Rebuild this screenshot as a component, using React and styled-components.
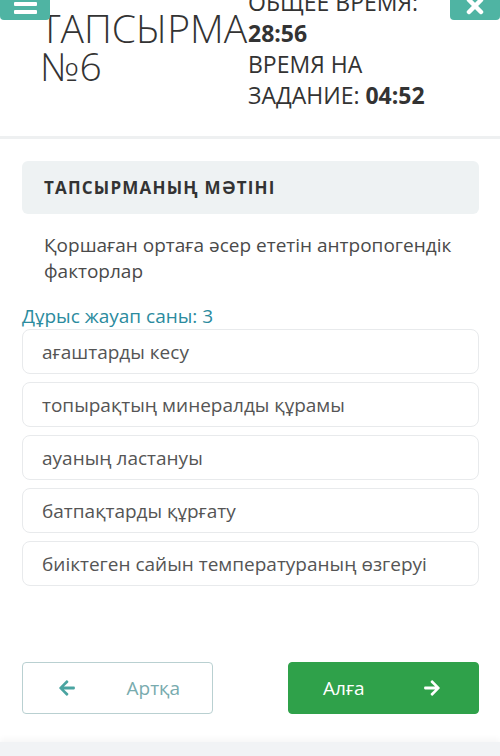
import React from "react";
import styled, { createGlobalStyle } from "styled-components";
import { FaArrowLeft, FaArrowRight } from "react-icons/fa";

const GlobalStyle = createGlobalStyle`
  html, body {
    margin: 0;
    padding: 0;
    background: #ffffff;
    font-family: "Open Sans", "Noto Sans", Arial, sans-serif;
    color: #333;
    overflow: hidden;
  }
  * { box-sizing: border-box; }
`;

const Page = styled.div`
  position: relative;
  width: 500px;
  min-height: 756px;
  display: flex;
  flex-direction: column;
  overflow: hidden;
`;

const CornerButton = styled.button`
  position: absolute;
  top: -30px;
  ${(p) => (p.$side === "left" ? "left: 0;" : "right: 0;")}
  width: 50px;
  height: 50px;
  border: none;
  border-radius: 4px;
  background: #4fb4a3;
  display: flex;
  align-items: center;
  justify-content: center;
  padding: 0;
  z-index: 2;
`;

const Burger = styled.span`
  display: flex;
  flex-direction: column;
  gap: 4px;
  margin-top: 18px;
`;

const BurgerBar = styled.span`
  display: block;
  width: 23px;
  height: 4px;
  border-radius: 1px;
  background: #ffffff;
`;

const Header = styled.header`
  margin-top: -13px;
  padding-left: 40px;
  display: flex;
  align-items: flex-start;
  height: 152px;
  border-bottom: 3px solid #eef0f1;
`;

const TitleCol = styled.div`
  flex: 0 0 208px;
  padding-top: 22px;
`;

const Title = styled.h1`
  margin: 0;
  font-size: 39px;
  line-height: 38px;
  font-weight: 300;
  color: #333;
  white-space: nowrap;
`;

const TimerCol = styled.div`
  font-size: 23px;
  line-height: 31px;
  color: #333;
`;

const TimerLine = styled.div`
  white-space: nowrap;
  font-weight: ${(p) => (p.$bold ? 700 : 400)};
`;

const Strong = styled.b`
  font-weight: 700;
`;

const Main = styled.main`
  padding: 0 21px 0 22px;
  display: flex;
  flex-direction: column;
`;

const TaskCard = styled.div`
  margin-top: 22px;
  height: 53px;
  border-radius: 6px;
  background: #eef2f3;
  display: flex;
  align-items: center;
  padding-left: 22px;
  font-size: 17px;
  font-weight: 700;
  letter-spacing: 1.2px;
  color: #333;
  text-transform: uppercase;
`;

const Question = styled.p`
  margin: 18px 0 0;
  padding-left: 22px;
  font-size: 19px;
  line-height: 26px;
  color: #4a4a4a;
`;

const AnswerCount = styled.div`
  margin-top: 20px;
  font-size: 19px;
  line-height: 24px;
  color: #2b8b9e;
`;

const Options = styled.div`
  margin-top: 1px;
  display: flex;
  flex-direction: column;
  gap: 8px;
`;

const Option = styled.div`
  height: 45px;
  border: 1px solid #e8eaec;
  border-radius: 8px;
  background: #ffffff;
  display: flex;
  align-items: center;
  padding-left: 19px;
  font-size: 19px;
  color: #555;
`;

const NavBar = styled.div`
  margin-top: 76px;
  padding: 0 21px 28px 22px;
  display: flex;
  justify-content: space-between;
`;

const NavButton = styled.button`
  width: 191px;
  height: 52px;
  border-radius: 4px;
  display: flex;
  align-items: center;
  justify-content: space-between;
  font-family: inherit;
  font-size: 19px;
  cursor: pointer;
  ${(p) =>
    p.$primary
      ? `
    background: #2fa14a;
    border: 1px solid #2fa14a;
    color: #ffffff;
    padding: 0 37px 0 34px;
  `
      : `
    background: #ffffff;
    border: 1px solid #b9d0d1;
    color: #78abae;
    padding: 0 32px 0 35px;
  `}
`;

const ArrowIcon = styled.span`
  display: flex;
  color: ${(p) => (p.$light ? "#ffffff" : "#4aa4a1")};
  font-size: 18px;
`;

const Footer = styled.footer`
  flex: 1;
  min-height: 14px;
  background: #f1f3f5;
  box-shadow: 0 -3px 6px rgba(0, 0, 0, 0.04);
`;

const CloseGlyph = () => (
  <svg width="20" height="20" viewBox="0 0 20 20" style={{ marginTop: 22 }}>
    <path
      d="M4 4 L16 16 M16 4 L4 16"
      stroke="#ffffff"
      strokeWidth="4.5"
      strokeLinecap="round"
    />
  </svg>
);

const options = [
  "ағаштарды кесу",
  "топырақтың минералды құрамы",
  "ауаның ластануы",
  "батпақтарды құрғату",
  "биіктеген сайын температураның өзгеруі",
];

export default function App() {
  return (
    <>
      <GlobalStyle />
      <Page>
        <CornerButton $side="left" aria-label="menu">
          <Burger>
            <BurgerBar />
            <BurgerBar />
            <BurgerBar />
          </Burger>
        </CornerButton>
        <CornerButton $side="right" aria-label="close">
          <CloseGlyph />
        </CornerButton>

        <Header>
          <TitleCol>
            <Title>
              ТАПСЫРМА
              <br />
              №6
            </Title>
          </TitleCol>
          <TimerCol>
            <TimerLine>ОБЩЕЕ ВРЕМЯ:</TimerLine>
            <TimerLine $bold>28:56</TimerLine>
            <TimerLine>ВРЕМЯ НА</TimerLine>
            <TimerLine>
              ЗАДАНИЕ: <Strong>04:52</Strong>
            </TimerLine>
          </TimerCol>
        </Header>

        <Main>
          <TaskCard>Тапсырманың мәтіні</TaskCard>
          <Question>Қоршаған ортаға әсер ететін антропогендік факторлар</Question>
          <AnswerCount>Дұрыс жауап саны: 3</AnswerCount>
          <Options>
            {options.map((o) => (
              <Option key={o}>{o}</Option>
            ))}
          </Options>
        </Main>

        <NavBar>
          <NavButton>
            <ArrowIcon>
              <FaArrowLeft />
            </ArrowIcon>
            Артқа
          </NavButton>
          <NavButton $primary>
            Алға
            <ArrowIcon $light>
              <FaArrowRight />
            </ArrowIcon>
          </NavButton>
        </NavBar>
        <Footer />
      </Page>
    </>
  );
}
